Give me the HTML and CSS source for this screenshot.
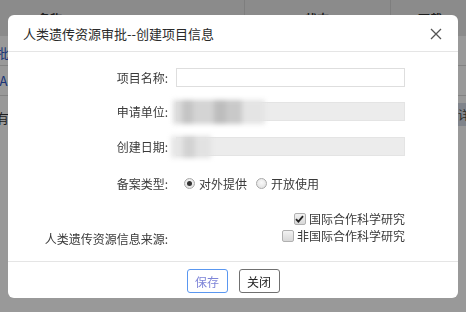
FILE: index.html
```html
<!DOCTYPE html>
<html lang="zh">
<head>
<meta charset="utf-8">
<link rel="stylesheet" href="styles.css">
</head>
<body>
<div class="page">
  <div class="thead">
    <div class="c c1"><span class="h1">名称</span></div>
    <div class="c c2"><span class="h2">状态</span></div>
    <div class="c c3"><span class="h3">下载</span></div>
  </div>
  <div class="row r1"><div class="c c1"><span class="cut link">审批</span></div><div class="c c2"></div><div class="c c3"></div></div>
  <div class="row r2"><div class="c c1"><span class="cut link">ULA</span></div><div class="c c2"></div><div class="c c3"></div></div>
  <div class="row r3"><div class="c c1"><span class="cut">没有</span></div><div class="c c2"></div><div class="c c3"><span class="detail">详情</span></div></div>
</div>
<div class="mask"></div>
<div class="dialog">
  <div class="dlg-head">
    <span class="title">人类遗传资源审批--创建项目信息</span>
    <svg class="close" width="12" height="12" viewBox="0 0 12 12"><path d="M1 1 L11 11 M11 1 L1 11" stroke="#555" stroke-width="1.3" fill="none"/></svg>
  </div>
  <div class="dlg-body">
    <div class="frow r-name">
      <label class="lbl">项目名称:</label>
      <div class="input"></div>
    </div>
    <div class="frow r-unit">
      <label class="lbl">申请单位:</label>
      <div class="input disabled"><div class="blur b1"></div></div>
    </div>
    <div class="frow r-date">
      <label class="lbl">创建日期:</label>
      <div class="input disabled"><div class="blur b2"></div></div>
    </div>
    <div class="frow radios">
      <label class="lbl">备案类型:</label>
      <div class="opts">
        <span class="radio on"></span><span class="otext">对外提供</span>
        <span class="radio"></span><span class="otext">开放使用</span>
      </div>
    </div>
    <div class="frow checks">
      <label class="lbl">人类遗传资源信息来源:</label>
      <div class="cbox">
        <div class="cline"><span class="check on"><svg width="9" height="8" viewBox="0 0 9 8"><path d="M1 4.2 L3.4 6.6 L8 1.2" stroke="#222" stroke-width="1.8" fill="none"/></svg></span><span>国际合作科学研究</span></div>
        <div class="cline"><span class="check"></span><span>非国际合作科学研究</span></div>
      </div>
    </div>
  </div>
  <div class="dlg-foot">
    <button class="btn save">保存</button>
    <button class="btn">关闭</button>
  </div>
</div>
</body>
</html>
```
FILE: styles.css
```css
* { box-sizing: border-box; }
html, body { margin: 0; padding: 0; }
body {
  width: 466px; height: 312px; overflow: hidden;
  background: #fff;
  font-family: "Noto Sans CJK SC", "Noto Sans", sans-serif;
  font-size: 12px; color: #333;
}
.page { width: 466px; }
.thead, .row { display: flex; }
.thead { height: 36px; background: #e8e8e8; }
.row { height: 30px; border-bottom: 1px solid #dadada; }
.r3 { height: 32px; border-bottom: none; }
.c { display: flex; align-items: center; white-space: nowrap; }
.c1 { width: 245px; border-right: 1px solid #dcdcdc; }
.c2 { width: 146px; border-right: 1px solid #dcdcdc; }
.c3 { width: 75px; overflow: hidden; }
.thead .c { border-right-color: #d2d2d2; }
.h1 { margin-left: 38px; font-weight: bold; }
.h2 { margin-left: 60px; font-weight: bold; }
.h3 { margin-left: 27px; font-weight: bold; }
.cut { margin-left: -17px; font-size: 13px; }
.r1 .cut { margin-top: 4px; }
.r3 .cut { margin-top: 10px; }
.link { color: #2a55c8; }
.detail { margin-left: 63px; margin-top: 4px; background: #d6dde8; padding: 3px 4px; color: #444; white-space: nowrap; }

.mask { position: fixed; inset: 0; background: rgba(0,0,0,0.4); }

.dialog {
  position: absolute; left: 8px; top: 15px;
  width: 450px; height: 283px;
  background: #fff; border-radius: 6px;
  display: flex; flex-direction: column;
}
.dlg-head {
  height: 37px; flex: none;
  border-bottom: 1px solid #e5e5e5;
  display: flex; align-items: center; justify-content: space-between;
  padding: 1px 16px 0 15px;
}
.title { font-size: 13px; color: #2a2a2a; }
.close { display: block; margin-top: 1px; }

.dlg-body {
  flex: 1; min-height: 0;
  display: flex; flex-direction: column;
  padding-top: 16px; color: #3a3a3a;
}
.frow { display: flex; align-items: center; height: 19px; flex: none; }
.r-unit { margin-top: 15px; }
.r-date { margin-top: 16px; }
.lbl { width: 160px; text-align: right; flex: none; }
.input {
  position: relative;
  margin-left: 8px; width: 229px; height: 19px;
  border: 1px solid #dedede; background: #fff;
}
.input.disabled { background: #ececec; border-color: #e4e4e4; }
.blur { position: absolute; filter: blur(2.5px); }
.b1 {
  left: -4px; top: -3px; width: 92px; height: 24px;
  background: linear-gradient(90deg, #dcdcdc 0 10%, #c4c4c4 10% 22%, #d4d4d4 22% 45%, #bdbdbd 45% 58%, #c9c9c9 58% 75%, #e4e4e4 75% 100%);
}
.b2 {
  left: -6px; top: -2px; width: 40px; height: 22px;
  background: linear-gradient(90deg, #e6e6e6 0 30%, #d2d2d2 30% 60%, #e2e2e2 60% 100%);
}
.radios { margin-top: 18px; height: 18px; }
.opts { display: flex; align-items: center; margin-left: 16px; }
.radio {
  width: 11px; height: 11px; border-radius: 50%;
  border: 1px solid #a8a8a8;
  background: radial-gradient(circle at 50% 40%, #fafafa, #dcdcdc);
  margin-right: 4px; position: relative;
}
.radio.on::after {
  content: ""; position: absolute; left: 2px; top: 2px;
  width: 5px; height: 5px; border-radius: 50%; background: #333;
}
.radio + .otext + .radio { margin-left: 9px; }
.checks { height: auto; margin-top: 18px; align-items: flex-end; }
.checks .lbl { margin-bottom: -3px; line-height: 17px; }
.cbox { margin-left: 8px; width: 229px; display: flex; flex-direction: column; align-items: flex-end; }
.cline { display: flex; align-items: center; height: 17px; }
.check {
  width: 12px; height: 12px; margin-right: 3px;
  border: 1px solid #b0b0b0; border-radius: 2px;
  background: linear-gradient(#f2f2f2, #d8d8d8);
  display: flex; align-items: center; justify-content: center;
}

.dlg-foot {
  height: 37px; flex: none;
  border-top: 1px solid #e5e5e5;
  display: flex; justify-content: center; align-items: flex-start;
  gap: 11px; padding-top: 7px;
}
.btn {
  font-family: inherit; font-size: 12px;
  width: 41px; height: 24px; padding: 0;
  background: #fff; color: #222;
  border: 1px solid #707070; border-radius: 3px;
}
.btn.save { border-color: #5a97f0; color: #7e85d8; }
```
